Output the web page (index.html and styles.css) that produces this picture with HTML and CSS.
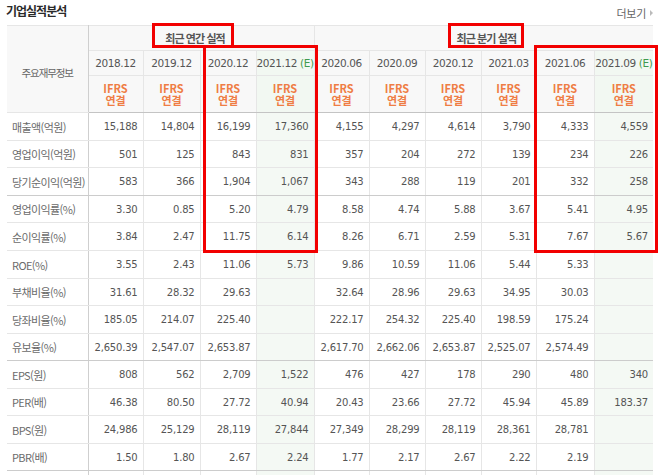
FILE: index.html
```html
<!DOCTYPE html>
<html lang="ko">
<head>
<meta charset="utf-8">
<title>기업실적분석</title>
<link rel="stylesheet" href="styles.css">
</head>
<body>
<div class="panel">
  <div class="head">
    <h3 class="title">기업실적분석</h3>
    <a class="more">더보기<span class="tri"></span></a>
  </div>
  <table class="fin">
    <colgroup>
      <col class="c-label"><col class="w55"><col class="w57"><col class="w56"><col class="w58"><col class="w55"><col class="w56"><col class="w56"><col class="w55"><col class="w58"><col class="w59">
    </colgroup>
    <thead>
      <tr class="h1">
        <th rowspan="3" class="lbl-h">주요재무정보</th>
        <th colspan="4" class="grp grp-y">최근 연간 실적</th>
        <th colspan="6" class="grp grp-q">최근 분기 실적</th>
      </tr>
      <tr class="h2">
        <th>2018.12</th><th>2019.12</th><th>2020.12</th><th class="est">2021.12 <em>(E)</em></th>
        <th>2020.06</th><th>2020.09</th><th>2020.12</th><th>2021.03</th><th>2021.06</th><th class="est">2021.09 <em>(E)</em></th>
      </tr>
      <tr class="h3">
        <th class="ifrs">IFRS<br>연결</th><th class="ifrs">IFRS<br>연결</th><th class="ifrs">IFRS<br>연결</th><th class="ifrs est">IFRS<br>연결</th>
        <th class="ifrs">IFRS<br>연결</th><th class="ifrs">IFRS<br>연결</th><th class="ifrs">IFRS<br>연결</th><th class="ifrs">IFRS<br>연결</th><th class="ifrs">IFRS<br>연결</th><th class="ifrs est">IFRS<br>연결</th>
      </tr>
    </thead>
    <tbody>
      <tr class="tall"><th>매출액(억원)</th><td>15,188</td><td>14,804</td><td>16,199</td><td class="est">17,360</td><td>4,155</td><td>4,297</td><td>4,614</td><td>3,790</td><td>4,333</td><td class="est">4,559</td></tr>
      <tr><th>영업이익(억원)</th><td>501</td><td>125</td><td>843</td><td class="est">831</td><td>357</td><td>204</td><td>272</td><td>139</td><td>234</td><td class="est">226</td></tr>
      <tr class="tall sep"><th>당기순이익(억원)</th><td>583</td><td>366</td><td>1,904</td><td class="est">1,067</td><td>343</td><td>288</td><td>119</td><td>201</td><td>332</td><td class="est">258</td></tr>
      <tr><th>영업이익률(%)</th><td>3.30</td><td>0.85</td><td>5.20</td><td class="est">4.79</td><td>8.58</td><td>4.74</td><td>5.88</td><td>3.67</td><td>5.41</td><td class="est">4.95</td></tr>
      <tr class="tall"><th>순이익률(%)</th><td>3.84</td><td>2.47</td><td>11.75</td><td class="est">6.14</td><td>8.26</td><td>6.71</td><td>2.59</td><td>5.31</td><td>7.67</td><td class="est">5.67</td></tr>
      <tr class="tall"><th>ROE(%)</th><td>3.55</td><td>2.43</td><td>11.06</td><td class="est">5.73</td><td>9.86</td><td>10.59</td><td>11.06</td><td>5.44</td><td>5.33</td><td class="est"></td></tr>
      <tr><th>부채비율(%)</th><td>31.61</td><td>28.32</td><td>29.63</td><td class="est"></td><td>32.64</td><td>28.96</td><td>29.63</td><td>34.95</td><td>30.03</td><td class="est"></td></tr>
      <tr class="tall"><th>당좌비율(%)</th><td>185.05</td><td>214.07</td><td>225.40</td><td class="est"></td><td>222.17</td><td>254.32</td><td>225.40</td><td>198.59</td><td>175.24</td><td class="est"></td></tr>
      <tr class="sep"><th>유보율(%)</th><td>2,650.39</td><td>2,547.07</td><td>2,653.87</td><td class="est"></td><td>2,617.70</td><td>2,662.06</td><td>2,653.87</td><td>2,525.07</td><td>2,574.49</td><td class="est"></td></tr>
      <tr class="tall"><th>EPS(원)</th><td>808</td><td>562</td><td>2,709</td><td class="est">1,522</td><td>476</td><td>427</td><td>178</td><td>290</td><td>480</td><td class="est">340</td></tr>
      <tr><th>PER(배)</th><td>46.38</td><td>80.50</td><td>27.72</td><td class="est">40.94</td><td>20.43</td><td>23.66</td><td>27.72</td><td>45.94</td><td>45.89</td><td class="est">183.37</td></tr>
      <tr class="tall"><th>BPS(원)</th><td>24,986</td><td>25,129</td><td>28,119</td><td class="est">27,844</td><td>27,349</td><td>28,299</td><td>28,119</td><td>28,361</td><td>28,781</td><td class="est"></td></tr>
      <tr class="sep"><th>PBR(배)</th><td>1.50</td><td>1.80</td><td>2.67</td><td class="est">2.24</td><td>1.77</td><td>2.17</td><td>2.67</td><td>2.22</td><td>2.19</td><td class="est"></td></tr>
      <tr class="tall"><th></th><td></td><td></td><td></td><td class="est"></td><td></td><td></td><td></td><td></td><td></td><td class="est"></td></tr>
    </tbody>
  </table>
  <div class="mark mark-y"></div>
  <div class="mark mark-q"></div>
  <div class="mark box-y"></div>
  <div class="mark box-q"></div>
</div>
</body>
</html>
```

FILE: styles.css
```css
html, body {
  margin: 0;
  padding: 0;
  background: #ffffff;
}

body {
  font-family: "Noto Sans CJK KR", "Noto Sans", sans-serif;
  color: #555;
  overflow: hidden;
}

.panel {
  position: relative;
  width: 660px;
}

.head {
  display: flex;
  justify-content: space-between;
  align-items: flex-start;
  height: 25px;
  padding: 3px 7px 0 6px;
  box-sizing: border-box;
}

.title {
  margin: 0;
  font-size: 12px;
  line-height: 16px;
  font-weight: bold;
  color: #2b2b2b;
  letter-spacing: -1px;
}

.more {
  display: flex;
  align-items: center;
  gap: 4px;
  margin-top: 3px;
  font-size: 11px;
  line-height: 14px;
  color: #666;
  letter-spacing: -0.3px;
}

.tri {
  width: 0;
  height: 0;
  border-left: 3px solid #bbb;
  border-top: 3px solid transparent;
  border-bottom: 3px solid transparent;
}

.fin {
  margin-left: 7px;
  width: 646px;
  border-collapse: collapse;
  table-layout: fixed;
  border-top: 1px solid #c4c4c4;
}

.c-label { width: 81px; }
.w55 { width: 55px; }
.w56 { width: 56px; }
.w57 { width: 57px; }
.w58 { width: 58px; }
.w59 { width: 59px; }

.fin th,
.fin td {
  padding: 0;
  border: 1px solid #e6e6e6;
  font-weight: normal;
  white-space: nowrap;
}

.fin tr > :first-child {
  border-left: 0;
}

.fin tr > :last-child {
  border-right: 0;
}

.fin thead th {
  background: #f8f8f8;
  text-align: center;
  font-family: "DejaVu Sans", sans-serif;
  font-size: 10.5px;
  color: #555;
  letter-spacing: -0.4px;
}

.fin thead th.est {
  background: #f2f8f2;
}

.fin thead .lbl-h,
.fin thead .grp {
  font-family: "Noto Sans CJK KR", sans-serif;
  font-size: 11px;
  color: #666;
  letter-spacing: -0.4px;
}

.fin thead .lbl-h {
  font-size: 10.5px;
  letter-spacing: -1.1px;
  padding-top: 7px;
}

.fin thead .grp {
  font-weight: bold;
  color: #555;
  letter-spacing: -0.9px;
}

.fin thead .grp-y {
  padding-right: 12px;
}

.fin thead .grp-q {
  padding-left: 5px;
}

.fin .lbl-h {
  border-right: 1px solid #cfcfcf;
}

.h1 { height: 25px; }
.h2 { height: 25px; }
.h3 { height: 37px; }

.fin thead .h3 th {
  border-bottom: 1px solid #c4c4c4;
}

.fin em {
  font-style: normal;
  color: #3f9b4f;
}

.fin thead th.ifrs {
  font-family: "Noto Sans CJK KR", sans-serif;
  font-weight: bold;
  font-size: 11px;
  line-height: 12px;
  color: #ef7d44;
  letter-spacing: 0;
}

.fin tbody tr {
  height: 27px;
}

.fin tbody tr.tall {
  height: 28px;
}

.fin tbody th {
  text-align: left;
  padding-left: 5px;
  font-size: 11px;
  color: #6b6b6b;
  letter-spacing: -0.6px;
  border-right: 1px solid #cfcfcf;
}

.fin tbody td {
  text-align: right;
  padding-right: 5px;
  font-family: "DejaVu Sans", sans-serif;
  font-size: 10px;
  color: #555;
  letter-spacing: -0.2px;
}

.fin tbody td.est {
  background: #f4f9f4;
}

.fin tbody tr.sep > * {
  border-bottom: 1px solid #cccccc;
}

.mark {
  position: absolute;
  border: 3px solid #f20000;
  box-sizing: border-box;
}

.mark-y { left: 152px; top: 23px; width: 82px; height: 25px; }
.mark-q { left: 448px; top: 23px; width: 76px; height: 25px; }
.box-y { left: 203px; top: 45px; width: 115px; height: 208px; }
.box-q { left: 534px; top: 45px; width: 124px; height: 208px; }
```
